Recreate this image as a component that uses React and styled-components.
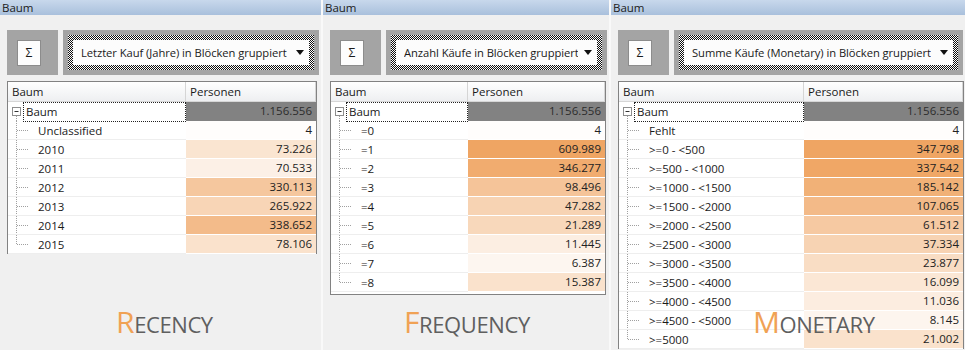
import styled, { createGlobalStyle } from 'styled-components';

const GlobalStyle = createGlobalStyle`
  html, body {
    margin: 0;
    padding: 0;
    background: #f0f0f0;
    overflow: hidden;
  }
  * { box-sizing: border-box; }
`;

const UI_FONT = '"Open Sans", "Noto Sans", sans-serif';
const ORANGE = [238, 157, 85];

function heat(t) {
  const c = ORANGE.map((v) => Math.round(255 + (v - 255) * t));
  return `rgb(${c[0]}, ${c[1]}, ${c[2]})`;
}

const panels = [
  {
    width: 321,
    tableWidth: 310,
    nameWidth: 178,
    select: 'Letzter Kauf (Jahre) in Blöcken gruppiert',
    label: 'Recency',
    labelLeft: 116,
    closed: false,
    rows: [
      ['Unclassified', '4', 0.02],
      ['2010', '73.226', 0.27],
      ['2011', '70.533', 0.15],
      ['2012', '330.113', 0.57],
      ['2013', '265.922', 0.43],
      ['2014', '338.652', 0.69],
      ['2015', '78.106', 0.3],
    ],
  },
  {
    width: 286,
    tableWidth: 276,
    nameWidth: 137,
    select: 'Anzahl Käufe in Blöcken gruppiert',
    label: 'Frequency',
    labelLeft: 81,
    closed: true,
    rows: [
      ['=0', '4', 0.02],
      ['=1', '609.989', 0.92],
      ['=2', '346.277', 0.85],
      ['=3', '98.496', 0.6],
      ['=4', '47.282', 0.45],
      ['=5', '21.289', 0.4],
      ['=6', '11.445', 0.17],
      ['=7', '6.387', 0.09],
      ['=8', '15.387', 0.3],
    ],
  },
  {
    width: 354,
    tableWidth: 346,
    nameWidth: 185,
    select: 'Summe Käufe (Monetary) in Blöcken gruppiert',
    label: 'Monetary',
    labelLeft: 142,
    closed: false,
    rows: [
      ['Fehlt', '4', 0.02],
      ['>=0 - <500', '347.798', 0.92],
      ['>=500 - <1000', '337.542', 0.9],
      ['>=1000 - <1500', '185.142', 0.8],
      ['>=1500 - <2000', '107.065', 0.7],
      ['>=2000 - <2500', '61.512', 0.55],
      ['>=2500 - <3000', '37.334', 0.45],
      ['>=3000 - <3500', '23.877', 0.35],
      ['>=3500 - <4000', '16.099', 0.25],
      ['>=4000 - <4500', '11.036', 0.18],
      ['>=4500 - <5000', '8.145', 0.1],
      ['>=5000', '21.002', 0.3],
    ],
  },
];

function App() {
  return (
    <>
      <GlobalStyle />
      <Window>
        {panels.map((p) => (
          <Panel key={p.label} $width={p.width}>
            <TitleBar>Baum</TitleBar>
            <Toolbar>
              <SigmaBox>
                <SigmaButton>Σ</SigmaButton>
              </SigmaBox>
              <DropFrame>
                <Checker>
                  <Select>
                    <SelectText>{p.select}</SelectText>
                    <svg width="8" height="5" viewBox="0 0 8 5">
                      <path d="M0 0 H8 L4 5 Z" fill="#111" />
                    </svg>
                  </Select>
                </Checker>
              </DropFrame>
            </Toolbar>
            <Table $width={p.tableWidth} $closed={p.closed}>
              <HeaderRow $nameWidth={p.nameWidth}>
                <HeaderCell>Baum</HeaderCell>
                <HeaderCell>Personen</HeaderCell>
              </HeaderRow>
              <Row $nameWidth={p.nameWidth}>
                <NameCell $root>
                  <svg width="15" height="19" viewBox="0 0 15 19">
                    <rect x="4.5" y="5.5" width="8" height="8" fill="#fff" stroke="#8e8e8e" />
                    <path d="M6.5 9.5 H10.5" stroke="#333" />
                    <path d="M8.5 14 V19" stroke="#a0a0a0" strokeDasharray="1 1" />
                  </svg>
                  <Focus>Baum</Focus>
                </NameCell>
                <ValueCell $root>1.156.556</ValueCell>
              </Row>
              {p.rows.map(([name, value, t], i) => (
                <Row key={name} $nameWidth={p.nameWidth}>
                  <NameCell>
                    <svg width="30" height="18" viewBox="0 0 30 18">
                      <path
                        d={i === p.rows.length - 1 ? 'M8.5 0 V9.5' : 'M8.5 0 V18'}
                        stroke="#a0a0a0"
                        strokeDasharray="1 1"
                      />
                      <path d="M9 9.5 H20" stroke="#a0a0a0" strokeDasharray="1 1" />
                    </svg>
                    <span>{name}</span>
                  </NameCell>
                  <ValueCell style={{ background: heat(t) }}>{value}</ValueCell>
                </Row>
              ))}
            </Table>
            <Label $left={p.labelLeft}>
              <Initial>{p.label[0]}</Initial>
              {p.label.slice(1)}
            </Label>
          </Panel>
        ))}
      </Window>
    </>
  );
}

export default App;

const Window = styled.div`
  width: 965px;
  height: 350px;
  display: flex;
  gap: 2px;
  background: #f9f9f9;
  overflow: hidden;
  font-family: ${UI_FONT};
  font-size: 11.5px;
  color: #1a1a1a;
`;

const Panel = styled.div`
  position: relative;
  flex: 0 0 ${(p) => p.$width}px;
  display: flex;
  flex-direction: column;
  background: #f0f0f0;
  overflow: hidden;
`;

const TitleBar = styled.div`
  flex: none;
  height: 15px;
  line-height: 15px;
  padding-left: 2px;
  background: linear-gradient(#c8d8ec, #a9c0dc);
  color: #1b1b1b;
`;

const Toolbar = styled.div`
  flex: none;
  margin-top: 15px;
  height: 45px;
  display: flex;
  gap: 5px;
  padding: 0 2px 0 7px;
`;

const SigmaBox = styled.div`
  width: 51px;
  display: flex;
  align-items: center;
  padding-left: 10px;
  background: #a4a4a4;
`;

const SigmaButton = styled.div`
  width: 24px;
  height: 26px;
  display: flex;
  align-items: center;
  justify-content: center;
  background: #fdfdfd;
  border: 1px solid #8c8c8c;
  font-size: 12px;
`;

const DropFrame = styled.div`
  flex: 1;
  min-width: 0;
  padding: 5px;
  background: #a4a4a4;
`;

const Checker = styled.div`
  height: 35px;
  padding: 5px;
  background: repeating-conic-gradient(#111 0 25%, #fff 0 50%) 0 0 / 2px 2px;
`;

const Select = styled.div`
  height: 25px;
  display: flex;
  align-items: center;
  gap: 6px;
  padding: 0 5px 0 8px;
  background: #fcfcfc;
  white-space: nowrap;
  overflow: hidden;

  svg {
    flex: none;
    margin-left: auto;
  }
`;

const SelectText = styled.span`
  font-size: 11.2px;
  letter-spacing: -0.05px;
  overflow: hidden;
`;

const Table = styled.div`
  flex: none;
  margin: 6px 0 0 7px;
  width: ${(p) => p.$width}px;
  background: #fff;
  border: 1px solid #828282;
  border-bottom: ${(p) => (p.$closed ? '1px solid #828282' : 'none')};
  padding-bottom: ${(p) => (p.$closed ? '2px' : '0')};
`;

const HeaderRow = styled.div`
  display: grid;
  grid-template-columns: ${(p) => p.$nameWidth}px 1fr;
  height: 20px;
  background: linear-gradient(#ffffff 0%, #f6f7f8 50%, #eeeff1 100%);
  border-bottom: 1px solid #d6d6d6;
`;

const HeaderCell = styled.div`
  padding-left: 4px;
  line-height: 19px;
  border-right: 1px solid #d5d5d5;
`;

const Row = styled.div`
  display: grid;
  grid-template-columns: ${(p) => p.$nameWidth}px 1fr;
  height: 19px;
`;

const NameCell = styled.div`
  display: flex;
  align-items: center;
  border-bottom: 1px solid ${(p) => (p.$root ? 'transparent' : '#eeeeee')};
  white-space: nowrap;
  svg { flex: none; }
`;

const Focus = styled.span`
  flex: 1;
  align-self: stretch;
  margin-bottom: -1px;
  padding-left: 2px;
  line-height: 17px;
  border: 1px dotted #222;
`;

const ValueCell = styled.div`
  text-align: right;
  padding-right: 4px;
  line-height: 18px;
  border-bottom: 1px solid #fff;
  background: ${(p) => (p.$root ? '#828282' : '#fff')};
  color: ${(p) => (p.$root ? '#2c2c2c' : '#222')};
`;

const Label = styled.div`
  position: absolute;
  top: 301px;
  left: ${(p) => p.$left}px;
  font-family: "Open Sans", "Noto Sans", sans-serif;
  font-size: 22px;
  letter-spacing: -0.4px;
  text-transform: uppercase;
  color: #5f5f5f;
  white-space: nowrap;
`;

const Initial = styled.span`
  font-size: 30px;
  color: #f0a255;
`;
